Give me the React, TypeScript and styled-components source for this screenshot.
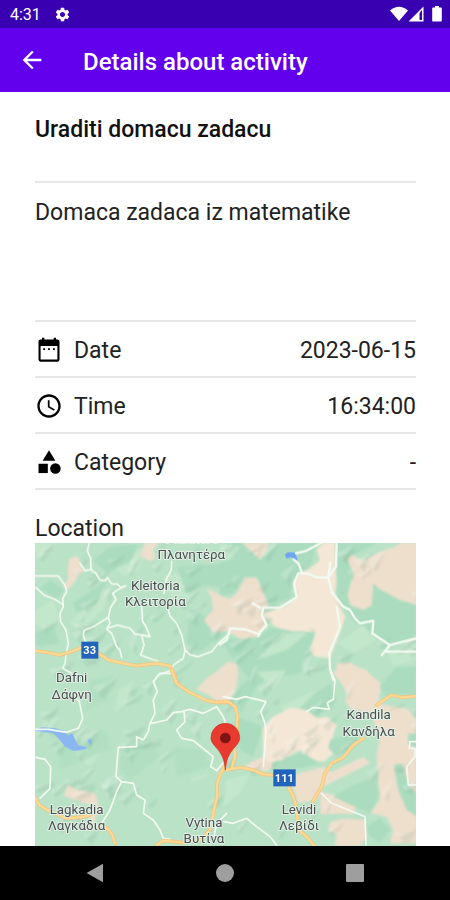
import React from "react";
import styled, { createGlobalStyle } from "styled-components";
import { MdArrowBack, MdCategory, MdSchedule, MdSettings } from "react-icons/md";

const GlobalStyle = createGlobalStyle`
  * { box-sizing: border-box; }
  body { margin: 0; background: #fff; font-family: Roboto, "Noto Sans", sans-serif; color: #111; }
`;

const Screen = styled.div`
  display: flex;
  flex-direction: column;
  min-height: 100vh;
`;

const StatusBar = styled.div`
  display: flex;
  align-items: center;
  justify-content: space-between;
  height: 28px;
  padding: 0 8px 0 10px;
  background: #3800b0;
  color: #fff;
  font-size: 16px;
`;

const StatusGroup = styled.div<{ $gap: number }>`
  display: flex;
  align-items: center;
  gap: ${(p) => p.$gap}px;
`;

const AppBar = styled.header`
  display: flex;
  align-items: center;
  gap: 35px;
  height: 64px;
  padding: 0 16px;
  background: #6200ee;
  color: #fff;
`;

const BackButton = styled.button`
  display: flex;
  align-items: center;
  justify-content: center;
  width: 32px;
  height: 32px;
  padding: 0;
  border: 0;
  background: none;
  color: inherit;
  cursor: pointer;
`;

const BarTitle = styled.h1`
  margin: 0;
  padding-top: 3px;
  font-size: 24px;
  font-weight: 500;
  line-height: 28px;
`;

const Content = styled.main`
  flex: 1;
  display: flex;
  flex-direction: column;
  padding: 0 34px 0 35px;
`;

const ActivityName = styled.h2`
  margin: 0;
  height: 91px;
  padding-top: 24px;
  border-bottom: 2px solid #e6e6e6;
  font-size: 23px;
  font-weight: 500;
  line-height: 28px;
`;

const Description = styled.p`
  margin: 0;
  min-height: 139px;
  padding-top: 16px;
  border-bottom: 2px solid #e6e6e6;
  font-size: 23px;
  line-height: 28px;
  color: #222;
`;

const Details = styled.dl`
  margin: 0;
`;

const DetailRow = styled.div`
  display: flex;
  align-items: center;
  height: 56px;
  padding-top: 4px;
  border-bottom: 2px solid #e6e6e6;
  font-size: 23px;
  line-height: 28px;
`;

const DetailLabel = styled.dt`
  display: flex;
  align-items: center;
  gap: 11px;
  color: #222;
  svg { color: #000; margin-bottom: 2px; }
`;

const DetailValue = styled.dd`
  margin: 0 0 0 auto;
  color: #222;
`;

const LocationTitle = styled.h3`
  margin: 0;
  padding-top: 25px;
  font-size: 23px;
  font-weight: 400;
  line-height: 28px;
  color: #222;
`;

const MapFrame = styled.section`
  flex: 1;
  display: flex;
  min-height: 300px;
  overflow: hidden;
  background: #b9e2c7;
  svg { flex: 1; width: 100%; height: auto; }
`;

const NavBar = styled.nav`
  display: grid;
  grid-template-columns: repeat(3, 1fr);
  align-items: center;
  height: 54px;
  padding: 0 30px;
  background: #000;
`;

const NavButton = styled.button`
  display: flex;
  justify-content: center;
  padding: 8px;
  border: 0;
  background: none;
  color: #9e9e9e;
  cursor: pointer;
`;

const CalendarIcon = () => (
  <svg width="28" height="28" viewBox="0 0 24 24" fill="currentColor" aria-hidden="true">
    <path fillRule="evenodd" d="M6 1.500h2V3h8V1.500h2V3h1.200c1 0 1.800.8 1.800 1.800v15.400c0 1-.8 1.800-1.800 1.800H4.800C3.800 22 3 21.200 3 20.200V4.800C3 3.800 3.800 3 4.800 3H6zM4.800 8.500v11.700h14.400V8.500z" />
    <path d="M7 10.500h1.600v1.500H7zM11.200 10.500h1.600v1.500h-1.600zM15.400 10.500H17v1.500h-1.600z" />
  </svg>
);

const SignalIcons = () => (
  <svg width="52" height="18" viewBox="0 0 52 18" fill="#fff" aria-hidden="true">
    <path d="M0 5.500Q9 -2 18 5.500L9 16z" />
    <path fillRule="evenodd" d="M33.500 1.500V16.500H18.500zM29.500 8v7h2.500V5z" />
    <path d="M43 2.500h2V1h4v1.500h2q.8 0 .8.800V15.700q0 .8-.8.800h-8q-.8 0-.8-.8V3.300q0-.8.8-.8z" />
  </svg>
);

const LAND = "#eedfcd";
const PLAIN = "#f4e7d5";
const DARK = "#abdcbf";
const LIGHT = "#c3e7cb";

/* Each tile below is drawn in its own local coordinates and shifted into place. */
const TILES = { nw: "translate(-15 -99)", ne: "translate(555 -99)", sw: "translate(-15 381)", se: "translate(555 381)" };

type Patch = { fill: string; d: string };

const Patches = ({ items }: { items: Patch[] }) => (
  <>{items.map((p) => <path key={p.d} d={p.d} fill={p.fill} />)}</>
);

const land: Record<keyof typeof TILES, Patch[]> = {
  nw: [
    { fill: LIGHT, d: "M15 98L80 98L50 130L15 150ZM15 300L70 270L90 330L40 350L15 345ZM120 340L180 260L240 240L220 300L150 360ZM300 98L345 98L330 180L280 200L240 160ZM400 200L480 180L500 240L430 280Z" },
    { fill: DARK, d: "M190 150L240 110L330 100L300 155L230 190ZM60 210L105 240L80 265L30 235ZM130 280L230 210L200 280L140 310ZM440 170L600 160L590 235L530 225L470 250ZM480 290L525 320L540 350L590 370L500 430L470 400ZM15 370L70 350L90 400L20 410Z" },
    { fill: LAND, d: "M118 148L140 138L152 152L150 170L165 182L147 193L135 215L112 240L102 232L115 205L113 175Z" },
    { fill: LAND, d: "M345 98L386 98L370 120L378 145L358 153L330 138Z" },
  ],
  ne: [
    { fill: DARK, d: "M0 98H70L120 150L180 98H290L270 175L220 210L210 265L145 285L115 205L75 200L40 250L0 260ZM350 98L470 98L400 135L380 145L400 190L385 240L390 285L455 290L460 220L520 260L590 285V385L510 405L455 370L400 330L350 260ZM0 390L110 385L150 355L285 365L275 425L240 490L90 510L50 460Z" },
    { fill: LIGHT, d: "M0 98L60 110L30 150L0 155ZM350 400L430 345L470 390L400 430ZM190 370L260 370L200 420L110 450ZM500 420H590V450L520 470Z" },
    { fill: LAND, d: "M65 98H145L140 120L120 148L92 122Z" },
    { fill: LAND, d: "M-42 235L-15 246L10 260L30 266L50 250L75 205L108 202L125 235L145 285L130 300L142 345L110 380L60 386L20 362L-20 368L-48 330L-20 300L-25 262Z" },
    { fill: PLAIN, d: "M270 175L302 150L290 120L310 98H345L345 170L350 215L345 250L360 290L376 320L360 370L330 444L285 440L270 420L288 365L215 364L165 350L130 310L200 285L230 262L220 220L240 190Z" },
    { fill: LAND, d: "M380 145L398 135L430 152L480 125L520 112L545 98H592V285L540 270L480 238L460 218L455 285L432 300L390 285L383 255L402 190Z" },
    { fill: LAND, d: "M338 490L375 455L395 460L430 490L480 515L480 550H380L360 510Z" },
  ],
  sw: [
    { fill: LIGHT, d: "M265 60L310 30L290 100L255 125ZM160 280L200 215L225 230L180 290ZM485 325L540 305L530 320L480 340Z" },
    { fill: "#b2dfc2", d: "M180 30L250 15L230 90L170 120ZM285 210L360 200L390 260L300 330L265 290ZM430 230L520 240L540 290L440 320ZM80 230L230 180L240 235L90 300Z" },
    { fill: LAND, d: "M115 345L140 358L195 370L205 400L190 480L175 480L180 405L100 378Z" },
    { fill: LAND, d: "M500 58L530 25L565 0L592 -24L618 -20L625 0L620 50L600 92H560L530 72Z" },
  ],
  se: [
    { fill: DARK, d: "M50 60L110 5L170 0L110 50L60 130ZM180 110L245 100L330 40L350 90L330 120L250 145ZM150 270L240 250L300 280L240 295L160 300ZM50 140L130 170L100 260L60 240Z" },
    { fill: LIGHT, d: "M110 5L200 0L160 60ZM180 110L200 100L290 60L210 150ZM20 330L90 310L60 370L10 410Z" },
    { fill: PLAIN, d: "M128 175L160 140L210 113L260 120L290 145L320 140L350 165L330 225L340 250L310 275L285 270L240 240L190 268L130 285Z" },
    { fill: LAND, d: "M70 290L110 268L130 260L160 285L140 305ZM220 315L310 290L335 305L430 260L450 280L370 320L310 350L290 390L235 400L215 340Z" },
    { fill: LAND, d: "M350 -20L395 -15L440 0L480 50L475 100L520 110L560 115L590 150V520H510L520 480L500 440L450 430L480 390L475 330L470 260L480 200L450 130L395 120L375 95L385 60L350 20Z" },
    { fill: LAND, d: "M330 455L380 445L435 450L440 500L420 528H345L350 495L325 480ZM300 365L345 375L415 400L400 432L300 432Z" },
    { fill: DARK, d: "M330 210L410 190L420 220L350 260L325 235ZM340 380L400 345L460 325L480 370L450 430L380 400ZM440 470L480 445L510 480L480 520L445 495ZM480 50L530 -10H590V75L545 72L500 80ZM520 285L545 280L570 350L590 370V440L560 420L535 360ZM565 190H590V235L565 225Z" },
  ],
};

const minorRoads: Record<keyof typeof TILES, string> = {
  nw: "M178 98L172 122L182 145L183 180L198 190L210 210L225 212L233 203L245 222L262 222L272 232L288 227L262 240L248 250L258 268L242 292L235 322L190 350L162 362L160 375L168 400M15 198H85L105 225L110 245L98 265L100 290L90 310L92 335L108 360L115 400L108 435L105 460L98 475L125 490M150 160L165 182L185 178M18 233L45 257L75 268L100 285M235 322L240 340L230 358L245 370L260 410L270 420L275 442M232 355L262 345L300 355L315 372L335 375L360 380L348 350L338 335L335 290M335 375L342 405L332 435L385 455M425 155L424 180L408 210L402 250M412 290L420 318L440 340L455 375L465 420L480 435L505 440L545 425L565 400L600 370M465 420L460 445L430 465L425 480L385 495L372 512",
  ne: "M0 403L20 390L30 355L75 358L115 372L140 345L125 315L130 293H180L230 262L222 220L235 190L260 190L290 202H325L348 170L350 98M325 202L335 245L350 265L370 290L390 300L405 325L420 340L460 332L457 370L510 405L590 385M510 405L485 435M495 425H590M350 290L360 350L328 430L330 475L340 510M245 185L235 160L220 148M228 130L260 122L305 98M325 202L330 160M115 378L120 370M120 293L98 280",
  sw: "M425 10H390L370 35L382 65L370 90L375 130L360 160L355 185L340 210L320 200L320 230L265 232L262 265L258 320L275 335L260 365L240 420L215 460M275 335L310 340L320 375L345 390L340 430L370 450L390 480L400 505L420 508M365 160L410 150L430 128L455 125L480 118L520 130L560 110L580 140L590 170M462 125L465 155L440 180L455 205L490 212L525 240L550 260L542 290L560 302L582 275M18 178L55 178L110 187L145 175L158 145L148 95L125 70M18 262L45 268L62 290L60 355L30 385M550 510L560 460L590 430",
  se: "M10 80L50 88L75 80L138 95L122 125L135 160L138 190L130 290M260 125L280 112L328 118L322 98L340 88L345 30L330 0M10 455L40 460L80 445L110 470L150 500L170 525M305 370L335 400L410 430L435 440L438 525M590 215H570L568 235H585V260L560 290L565 345H590",
};

const mainRoads: Record<keyof typeof TILES, string> = {
  nw: "M12 422L50 427L90 435L125 425L155 412L205 430L235 450L290 462L320 467L380 460L420 468L432 490L442 520",
  ne: "",
  sw: "M425 0L440 40L475 65L530 92L560 97L600 97M588 280L572 310L560 345L562 375L550 430L540 480L510 510L460 518L400 512L380 525M15 382L28 405L60 425L110 445L165 440L190 430M175 465L225 470L245 490L255 520",
  se: "M0 95L25 95L45 110L52 135L50 200L42 225L45 260L35 295M18 300L60 292L100 300L130 313L160 315M205 350L220 380L230 415L235 480L260 500L285 530M278 395L305 350L315 310L335 280L370 262L400 225L430 205M470 105L500 85L515 75L545 82L590 78",
};

const labels: { x: number; y: number; text: string }[] = [
  { x: 472, y: 1, text: "Planitero" },
  { x: 469, y: 49, text: "Πλανητέρα" },
  { x: 361, y: 141, text: "Kleitoria" },
  { x: 361, y: 189, text: "Κλειτορία" },
  { x: 110, y: 418, text: "Dafni" },
  { x: 110, y: 468, text: "Δάφνη" },
  { x: 125, y: 814, text: "Lagkadia" },
  { x: 125, y: 862, text: "Λαγκάδια" },
  { x: 507, y: 852, text: "Vytina" },
  { x: 507, y: 900, text: "Βυτίνα" },
  { x: 792, y: 814, text: "Levidi" },
  { x: 792, y: 862, text: "Λεβίδι" },
  { x: 1001, y: 529, text: "Kandila" },
  { x: 1001, y: 578, text: "Κανδήλα" },
];

/* Hillshade: slanted ridges with a lit side and a shadow side, spread by a fixed seed. */
const ridges = (() => {
  let seed = 29;
  const next = () => {
    seed = (seed * 16807) % 2147483647;
    return seed / 2147483647;
  };
  return Array.from({ length: 170 }, () => {
    const x = Math.round(next() * 1143);
    const y = Math.round(next() * 909);
    const w = Math.round(20 + next() * 45);
    const h = Math.round(15 + next() * 40);
    const t = Math.round(6 + next() * 12);
    return {
      shadow: `M${x} ${y}L${x + w} ${y - h}L${x + w - t} ${y - h + t * 2}L${x + t} ${y + t}Z`,
      lit: `M${x} ${y}L${x + w} ${y - h}L${x + w - t * 2} ${y - h + t}L${x - t} ${y - t}Z`,
    };
  });
})();

const tileNames = Object.keys(TILES) as (keyof typeof TILES)[];

const AreaMap = () => (
  <svg viewBox="0 0 1143 909" preserveAspectRatio="xMidYMid slice" role="img" aria-label="Map">
    <defs>
      <filter id="soften" x="-5%" y="-5%" width="110%" height="110%">
        <feGaussianBlur stdDeviation="3" />
      </filter>
    </defs>
    <rect width="1143" height="909" fill="#b9e2c7" />
    {tileNames.map((t) => (
      <g key={t} transform={TILES[t]} filter="url(#soften)"><Patches items={land[t]} /></g>
    ))}
    <g filter="url(#soften)">
      {ridges.map((r) => (
        <g key={r.lit}>
          <path d={r.shadow} fill="#5d8a6d" opacity=".12" />
          <path d={r.lit} fill="#fff" opacity=".18" />
        </g>
      ))}
    </g>
    <g transform={TILES.ne}>
      <path d="M282 185L300 155L297 120L315 102H338V170L340 215L335 250L350 290L364 320L350 370L325 430L295 430L282 415L296 355L215 354L172 340L145 312L205 294L240 265L230 225L245 198Z" fill={PLAIN} filter="url(#soften)" />
    </g>
    <path d="M20 553L60 556L85 563L100 576L112 571L120 589L130 606L158 613L165 606L157 593L169 586L172 601L150 619L115 624L90 611L75 591L55 571L0 563Z" fill="#8ab6f2" />
    <path d="M750 35L758 28H780L788 50L778 54L770 43L754 46Z" fill="#6fa6f2" />
    <g fill="none" strokeLinejoin="round" strokeLinecap="round">
      {tileNames.map((t) => (
        <path key={t} transform={TILES[t]} d={minorRoads[t]} stroke="#f3faf1" strokeWidth={t === "ne" ? 7 : 5} />
      ))}
      {tileNames.map((t) => (
        <g key={t} transform={TILES[t]}>
          <path d={mainRoads[t]} stroke="#efc27c" strokeWidth="11" />
          <path d={mainRoads[t]} stroke="#fbd995" strokeWidth="7" />
        </g>
      ))}
    </g>
    <g fontSize="40" textAnchor="middle" fill="#4a4e50" stroke="#e3f2e6" strokeWidth="6" strokeLinejoin="round" paintOrder="stroke">
      {labels.map((l) => <text key={l.text} x={l.x} y={l.y}>{l.text}</text>)}
    </g>
    <g fill="#2264bb">
      <rect x="139" y="296" width="51" height="51" />
      <rect x="715" y="679" width="67" height="51" />
    </g>
    <g fill="#fff" fontSize="33" fontWeight="700" textAnchor="middle">
      <text x="164" y="333">33</text>
      <text x="748" y="716">111</text>
    </g>
    <path d="M571 681C568 651 562 637 550 621C538 606 528 599 528 584A43 43 0 0 1 614 584C614 599 604 606 592 621C580 637 574 651 571 681Z" fill="#e83a2f" stroke="#d32f26" strokeWidth="2" />
    <circle cx="571" cy="585" r="16" fill="#7f1512" />
  </svg>
);

const details = [
  { label: "Date", value: "2023-06-15", icon: <CalendarIcon /> },
  { label: "Time", value: "16:34:00", icon: <MdSchedule size={28} aria-hidden /> },
  { label: "Category", value: "-", icon: <MdCategory size={28} aria-hidden /> },
];

export default function App() {
  return (
    <Screen>
      <GlobalStyle />
      <StatusBar>
        <StatusGroup $gap={13}>
          <span>4:31</span>
          <MdSettings size={17} aria-hidden />
        </StatusGroup>
        <SignalIcons />
      </StatusBar>
      <AppBar>
        <BackButton aria-label="Back"><MdArrowBack size={28} /></BackButton>
        <BarTitle>Details about activity</BarTitle>
      </AppBar>
      <Content>
        <ActivityName>Uraditi domacu zadacu</ActivityName>
        <Description>Domaca zadaca iz matematike</Description>
        <Details>
          {details.map((d) => (
            <DetailRow key={d.label}>
              <DetailLabel>{d.icon}{d.label}</DetailLabel>
              <DetailValue>{d.value}</DetailValue>
            </DetailRow>
          ))}
        </Details>
        <LocationTitle>Location</LocationTitle>
        <MapFrame><AreaMap /></MapFrame>
      </Content>
      <NavBar aria-label="System">
        <NavButton aria-label="Back">
          <svg width="20" height="20" viewBox="0 0 20 20"><path d="M1.500 10L18 .8V19.200Z" fill="currentColor" /></svg>
        </NavButton>
        <NavButton aria-label="Home">
          <svg width="20" height="20" viewBox="0 0 20 20"><circle cx="10" cy="10" r="9" fill="currentColor" /></svg>
        </NavButton>
        <NavButton aria-label="Recent apps">
          <svg width="20" height="20" viewBox="0 0 20 20"><rect x="1" y="1" width="18" height="18" rx="1" fill="currentColor" /></svg>
        </NavButton>
      </NavBar>
    </Screen>
  );
}
